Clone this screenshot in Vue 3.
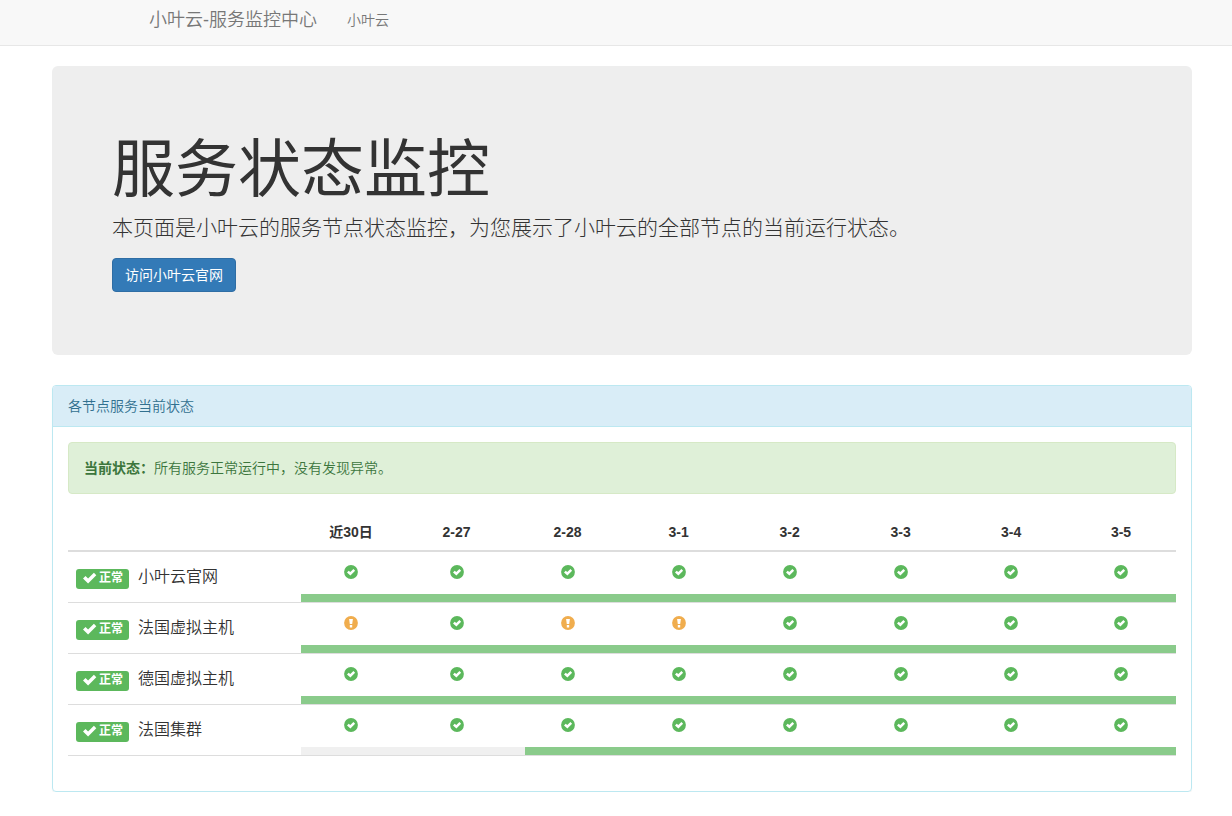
<script setup>
const days = ['近30日', '2-27', '2-28', '3-1', '3-2', '3-3', '3-4', '3-5']

const ok = 'ok'
const warn = 'warn'

const services = [
  { name: '小叶云官网', checks: [ok, ok, ok, ok, ok, ok, ok, ok], idle: 0 },
  { name: '法国虚拟主机', checks: [warn, ok, warn, warn, ok, ok, ok, ok], idle: 0 },
  { name: '德国虚拟主机', checks: [ok, ok, ok, ok, ok, ok, ok, ok], idle: 0 },
  { name: '法国集群', checks: [ok, ok, ok, ok, ok, ok, ok, ok], idle: 25.6 }
]
</script>

<template>
  <header class="navbar">
    <nav class="nav-inner">
      <a class="brand" href="#">小叶云-服务监控中心</a>
      <a class="nav-link" href="#">小叶云</a>
    </nav>
  </header>

  <main class="container">
    <section class="jumbotron">
      <h1>服务状态监控</h1>
      <p>本页面是小叶云的服务节点状态监控，为您展示了小叶云的全部节点的当前运行状态。</p>
      <a class="btn" href="#">访问小叶云官网</a>
    </section>

    <section class="panel">
      <h2 class="panel-heading">各节点服务当前状态</h2>
      <div class="panel-body">
        <div class="alert" role="status"><strong>当前状态：</strong>所有服务正常运行中，没有发现异常。</div>

        <table>
          <colgroup>
            <col class="col-name">
            <col class="col-month">
            <col v-for="n in 5" :key="n" class="col-day">
            <col>
            <col>
          </colgroup>
          <thead>
            <tr>
              <td></td>
              <th v-for="day in days" :key="day" scope="col">{{ day }}</th>
            </tr>
          </thead>
          <tbody v-for="service in services" :key="service.name">
            <tr>
              <th class="name" scope="row" rowspan="2">
                <div class="name-row">
                  <span class="label">
                    <svg class="tick" viewBox="0 0 14 12" aria-hidden="true">
                      <path d="M0 6.6 2.5 4.1 5.1 6.6 10.9 0.8 13.3 3.2 5.1 11.5Z" />
                    </svg>
                    正常
                  </span>
                  <span>{{ service.name }}</span>
                </div>
              </th>
              <td v-for="(check, i) in service.checks" :key="i" class="check">
                <svg v-if="check === ok" class="sign ok" viewBox="0 0 14 14" role="img" aria-label="正常">
                  <circle cx="7" cy="7" r="6.9" />
                  <path d="M3 7.4 4.7 5.7 6.3 7.1 9.4 4.1 11.1 5.8 6.4 10.5Z" />
                </svg>
                <svg v-else class="sign warn" viewBox="0 0 14 14" role="img" aria-label="异常">
                  <circle cx="7" cy="7" r="6.9" />
                  <path d="M5.1 3H8.9L8.2 8H5.8ZM5.8 9.1H8.2V11.4H5.8Z" />
                </svg>
              </td>
            </tr>
            <tr>
              <td class="bar-cell" colspan="8">
                <div class="bar"><div class="idle" :style="{ width: service.idle + '%' }"></div></div>
              </td>
            </tr>
          </tbody>
        </table>
      </div>
    </section>
  </main>
</template>

<style>
body {
  margin: 0;
  background: #fff;
}
</style>

<style scoped>
.navbar,
.container {
  font-family: "Liberation Sans", "Noto Sans CJK SC", sans-serif;
  font-size: 14px;
  font-weight: 350;
  line-height: 20px;
  color: #333;
}

.navbar {
  background: #f8f8f8;
  border-bottom: 1px solid #e7e7e7;
  margin-bottom: 20px;
}

.nav-inner {
  display: flex;
  align-items: center;
  gap: 30px;
  padding: 10px 149px 15px;
}

.nav-inner a {
  color: #777;
  text-decoration: none;
}

.brand {
  font-size: 18px;
}

.container {
  margin: 0 40px 0 52px;
}

.jumbotron {
  padding: 69px 60px 63px;
  margin-bottom: 30px;
  background: #eee;
  border-radius: 6px;
}

h1 {
  margin: 0 0 9px;
  font-size: 63px;
  font-weight: 400;
  line-height: 69px;
}

.jumbotron p {
  margin: 0 0 15px;
  font-size: 21px;
  font-weight: 300;
  line-height: 30px;
}

.btn {
  display: block;
  width: fit-content;
  padding: 6px 12px;
  border: 1px solid #2e6da4;
  border-radius: 4px;
  background: #337ab7;
  color: #fff;
  font-weight: 400;
  text-decoration: none;
}

.panel {
  border: 1px solid #bce8f1;
  border-radius: 4px;
  box-shadow: 0 1px 1px rgba(0, 0, 0, 0.05);
}

.panel-heading {
  margin: 0;
  padding: 10px 15px;
  border-bottom: 1px solid #bce8f1;
  border-radius: 3px 3px 0 0;
  background: #d9edf7;
  color: #31708f;
  font-size: 14px;
  font-weight: 350;
}

.panel-body {
  padding: 15px 15px 35px;
}

.alert {
  padding: 15px;
  margin-bottom: 20px;
  border: 1px solid #d6e9c6;
  border-radius: 4px;
  background: #dff0d8;
  color: #3c763d;
}

.alert strong {
  font-weight: 700;
}

table {
  width: 100%;
  table-layout: fixed;
  border-collapse: separate;
  border-spacing: 0;
}

.col-name {
  width: 21.03%;
}

.col-month {
  width: 9.03%;
}

.col-day {
  width: 10.02%;
}

td,
th {
  padding: 0;
  text-align: center;
}

thead th,
thead td {
  padding: 8px;
  border-bottom: 2px solid #ddd;
}

.name {
  padding: 0 8px;
  border-bottom: 1px solid #ddd;
  font-size: 16px;
  font-weight: 350;
}

.name-row {
  display: flex;
  align-items: center;
  gap: 9px;
}

.label {
  display: flex;
  align-items: center;
  gap: 2px;
  padding: 0 6px 2px 7px;
  margin-top: 4px;
  border-radius: 3px;
  background: #5cb85c;
  color: #fff;
  font-size: 12px;
  font-weight: 700;
  line-height: 18px;
}

.tick {
  width: 14px;
  height: 12px;
  fill: #fff;
}

.check {
  height: 42px;
}

.sign {
  display: block;
  width: 14px;
  height: 14px;
  margin: 0 auto 2px;
}

.sign path {
  fill: #fff;
}

.ok circle {
  fill: #5cb85c;
}

.warn circle {
  fill: #f0ad4e;
}

.bar-cell {
  border-bottom: 1px solid #ddd;
}

.bar {
  height: 8px;
  background: #8acb8b;
}

.idle {
  height: 8px;
  background: #f0f0f0;
}
</style>
